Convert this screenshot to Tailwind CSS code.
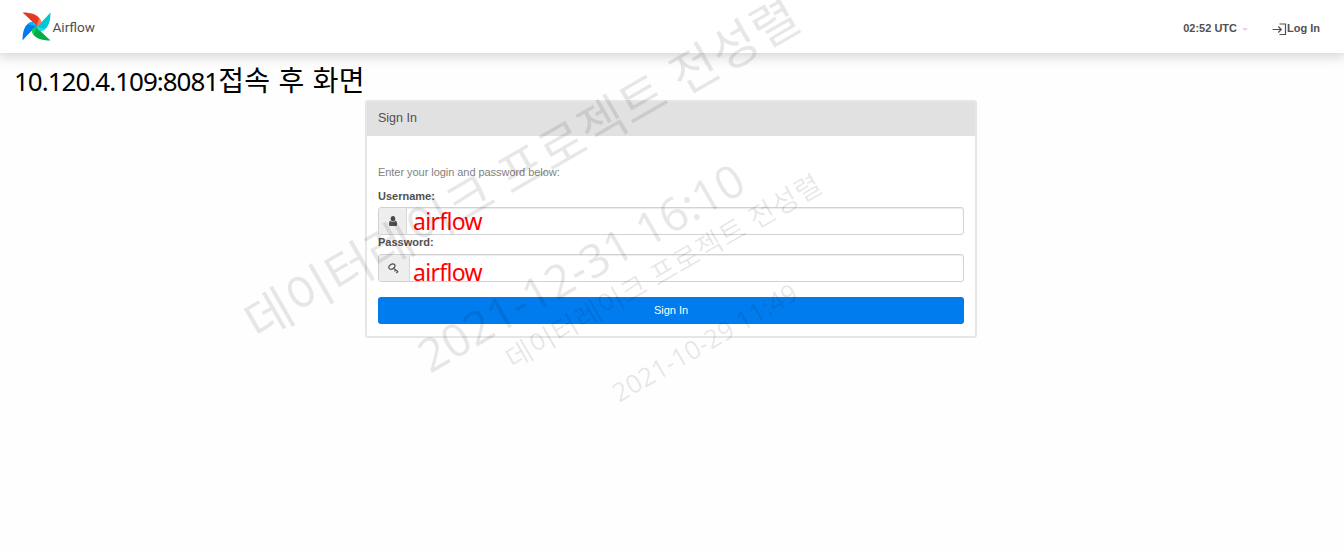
<!DOCTYPE html>
<html lang="ko">
<head>
<meta charset="utf-8">
<title>Airflow</title>
<script src="https://cdn.jsdelivr.net/npm/@tailwindcss/browser@4"></script>
</head>
<body class="relative h-[555px] overflow-hidden bg-[#fefefe] font-['Liberation_Sans',Arial,sans-serif] text-[11px] text-[#51504f]">
<header class="flex h-[53px] items-center justify-between bg-white pr-6 pl-[22px] shadow-[0_1px_12px_2px_rgba(0,0,0,0.18)]">
  <div class="flex items-center">
    <svg class="h-[29px] w-[29px]" viewBox="0 0 56 56">
      <path fill="#017cee" d="M1 55C1 38 5 24 17 20C22 20 26 24 28 28Q18 36 1 55Z"/>
      <path fill="#00ad46" d="M55 55C38 55 24 51 20 39C20 34 24 30 28 28Q36 38 55 55Z"/>
      <path fill="#00c7d4" d="M55 1C55 18 51 32 39 36C34 36 30 32 28 28Q38 20 55 1Z"/>
      <path fill="#e43921" d="M1 1C18 1 32 5 36 17C36 22 32 26 28 28Q20 18 1 1Z"/>
      <path fill="#0cb6ff" d="M28 28 11 23C17 17 26 18 28 28Z"/>
      <path fill="#ff7557" d="M28 28 33 11C39 17 38 26 28 28Z"/>
      <path fill="#11e1ee" d="M28 28 45 33C39 39 30 38 28 28Z"/>
      <path fill="#04d659" d="M28 28 23 45C17 39 18 30 28 28Z"/>
    </svg>
    <svg class="h-[29px] w-[46px]" viewBox="0 0 46 29"><text x="1.5" y="19.5" textLength="42.5" lengthAdjust="spacingAndGlyphs" fill="#51504f" font-family="Roboto, sans-serif" font-size="13.5">Airflow</text></svg>
  </div>
  <nav class="flex items-center pt-1 font-bold">
    <div class="flex items-center gap-[5px]"><span>02:52 UTC</span><span class="mt-0.5 border-x-[3px] border-t-[3px] border-x-transparent border-t-[#e4d3e6]"></span></div>
    <div class="ml-6 flex items-center">
      <svg class="h-[14px] w-[15px]" viewBox="0 0 15 14" fill="none" stroke="#51504f" stroke-width="1.2"><path d="M0.5 7.5h9M6.3 4.5l3 3-3 3M7.5 2h6v10.5h-6"/></svg>
      <span>Log In</span>
    </div>
  </nav>
</header>

<p class="flex h-[47px] items-baseline pt-[7px] pl-[14px] text-black">
  <span class="font-['Noto_Sans',sans-serif] text-[26px] leading-[38px] tracking-[-1px]">10.120.4.109:8081</span><span class="font-['Noto_Sans_CJK_KR',sans-serif] text-[28px] leading-[38px] tracking-[0.3px]">접속 후 화면</span>
</p>

<main class="mx-auto w-[612px] translate-x-[-1px] rounded-[3px] border-2 border-[#e6e6e6] bg-white">
  <h1 class="h-[34px] bg-[#e1e1e1] pl-[11px] text-[12.5px] leading-[33px]">Sign In</h1>
  <form class="px-[11px] pt-[29px] pb-3">
    <p class="h-[26px] tracking-[-0.05px] leading-[14px] text-[#828180]">Enter your login and password below:</p>
    <label class="block h-4 leading-[11px] font-bold">Username:</label>
    <div class="flex h-7 rounded-[3px] border border-[#d2d2d2] shadow-[inset_0_1px_1px_rgba(0,0,0,0.08)]">
      <span class="flex w-7 items-center justify-center rounded-l-[2px] border-r border-[#d8d8d8] bg-[#eee]">
        <svg class="h-[10px] w-2" viewBox="0 0 8 10" fill="#51504f"><path d="M4 0C2.5 0 1.7 1.1 1.7 2.8S2.7 5.6 4 5.6s2.3-1.1 2.3-2.8S5.5 0 4 0ZM1.4 4.8C.4 5.1 0 6.3 0 8.2 0 9.5.5 10 1.4 10h5.2C7.5 10 8 9.5 8 8.2c0-1.9-.4-3.1-1.4-3.4-1.3 1.7-3.9 1.7-5.2 0Z"/></svg>
      </span>
      <span class="pl-[6px] font-['Noto_Sans',sans-serif] text-[23px] leading-[26px] tracking-[-0.7px] text-[#ff0000]">airflow</span>
    </div>
    <label class="block h-[19px] pt-0.5 leading-[11px] font-bold">Password:</label>
    <div class="flex h-7 rounded-[3px] border border-[#d2d2d2] shadow-[inset_0_1px_1px_rgba(0,0,0,0.08)]">
      <span class="flex w-[31px] items-center justify-center rounded-l-[2px] border-r border-[#d8d8d8] bg-[#eee]">
        <svg class="mr-px h-[11px] w-[11px]" viewBox="0 0 11 11" fill="none" stroke="#51504f" stroke-width="1.2"><ellipse cx="3.9" cy="3.6" rx="3.3" ry="2.4" transform="rotate(-35 3.9 3.6)"/><path d="M5 5 10.2 8.7M6.4 8.4l1.5-1.4M8.3 10.1l1.6-1.6"/></svg>
      </span>
      <span class="pl-[3px] font-['Noto_Sans',sans-serif] text-[23px] leading-[35px] tracking-[-0.7px] text-[#ff0000]">airflow</span>
    </div>
    <button type="button" class="mt-[15px] block h-[27px] w-full rounded-[3px] bg-[#017cee] text-white">Sign In</button>
  </form>
</main>

<!-- Diagonal watermark over the whole page -->
<svg class="pointer-events-none absolute inset-0" width="1344" height="555" fill="#000" fill-opacity="0.095" font-family="'Noto Sans','Noto Sans CJK KR',sans-serif">
  <text transform="translate(258 342) rotate(-30)" font-size="50" textLength="630">데이터레이크 프로젝트 전성렬</text>
  <text transform="translate(430 374) rotate(-30)" font-size="46" textLength="368">2021-12-31 16:10</text>
  <text transform="translate(513 370) rotate(-30)" font-size="28" textLength="359">데이터레이크 프로젝트 전성렬</text>
  <text transform="translate(619 403) rotate(-30)" font-size="26" textLength="209">2021-10-29 11:49</text>
</svg>
</body>
</html>
